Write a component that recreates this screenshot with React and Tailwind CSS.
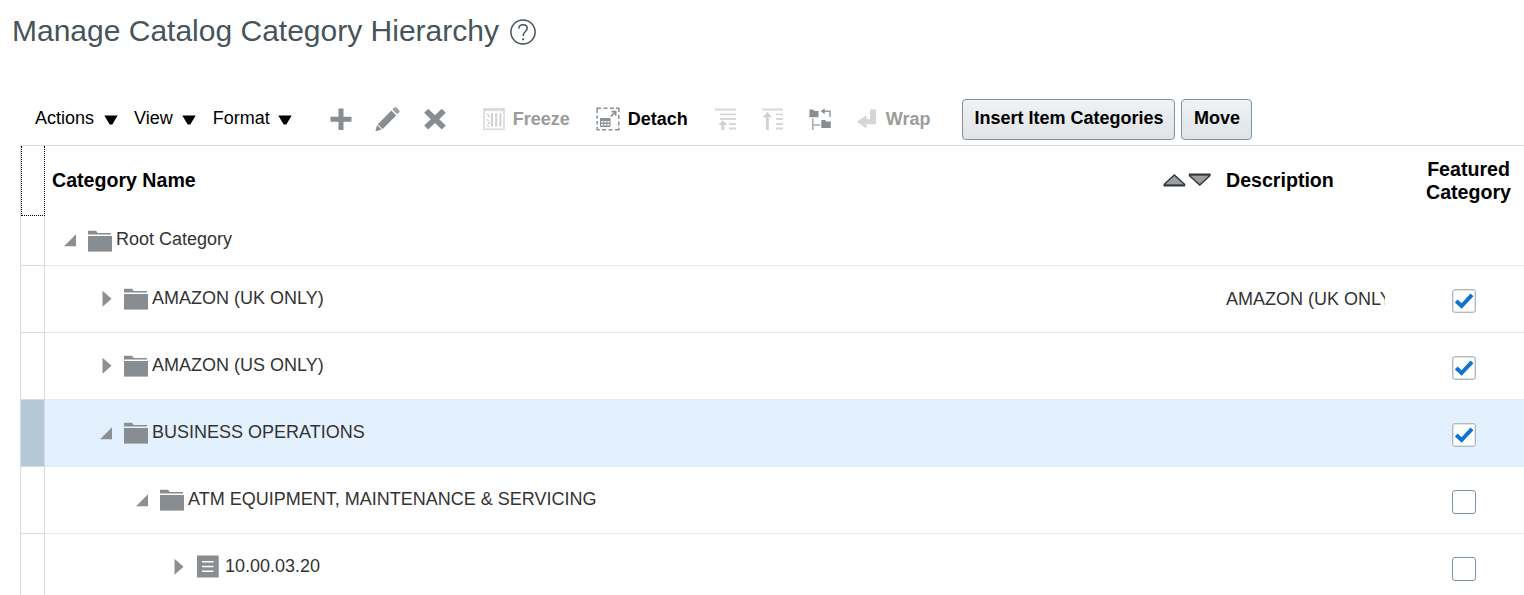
import React from 'react';

const rows = [
  { name: 'Root Category', level: 0, open: true, type: 'root' },
  { name: 'AMAZON (UK ONLY)', level: 1, description: 'AMAZON (UK ONLY)', featured: true },
  { name: 'AMAZON (US ONLY)', level: 1, featured: true },
  { name: 'BUSINESS OPERATIONS', level: 1, open: true, featured: true, selected: true },
  { name: 'ATM EQUIPMENT, MAINTENANCE & SERVICING', level: 2, open: true, featured: false },
  { name: '10.00.03.20', level: 3, type: 'item', featured: false },
];

const indents = ['pl-[18px]', 'pl-[54px]', 'pl-[90px]', 'pl-[126px]'];

function Svg({ w, h, className = '', children }) {
  return (
    <svg width={w} height={h} viewBox={`0 0 ${w} ${h}`} className={`shrink-0 ${className}`} fill="none">
      {children}
    </svg>
  );
}

function HelpIcon() {
  return (
    <Svg w={28} h={28} className="ml-[10.5px] mt-[17.5px]">
      <circle cx="14" cy="14" r="12.1" stroke="#47545a" strokeWidth="1.5" />
      <path d="M9.8 10.6C9.9 8 11.5 6.7 14 6.7s4.2 1.4 4.2 3.6c0 3.2-4 3.6-4 7v.6" stroke="#47545a" strokeWidth="1.5" />
      <circle cx="14.1" cy="21.3" r="1.1" fill="#47545a" />
    </Svg>
  );
}

function Caret() {
  return (
    <Svg w={14} h={10} className="mt-[5px]">
      <path d="M.3.5h13.4L8.3 9.4H5.7z" fill="#000" />
    </Svg>
  );
}

function PlusIcon() {
  return (
    <Svg w={24} h={24} className="ml-[37px]">
      <path d="M9.5 1.5h5v8.3h8v5h-8V23h-5v-8.2h-8v-5h8z" fill="#878d91" />
    </Svg>
  );
}

function PencilIcon() {
  return (
    <Svg w={26} h={26} className="ml-[22px]">
      <path d="m16.4 4.6 4.8 4.8L7.6 23l-4.8-4.8z" fill="#878d91" />
      <path d="M17.4 3.6 19.4 1.6q1-.9 2 0l2.8 2.8q.8.9 0 1.9l-2 2z" fill="#9aa0a3" />
      <path d="m2.1 19 4.6 4.6L.4 25.2z" fill="#878d91" />
    </Svg>
  );
}

function DeleteIcon() {
  return (
    <Svg w={24} h={24} className="ml-[22px]">
      <path d="m5.2 1.8 6.8 6.5 6.8-6.5 4 4L16.2 12.2l6.6 6.4-4 4L12 16l-6.8 6.6-4-4 6.6-6.4L1.2 5.8z" fill="#878d91" />
    </Svg>
  );
}

function FreezeIcon() {
  return (
    <Svg w={22} h={22} className="ml-[36px]">
      <path d="M1 .8h20v20.4H1z" stroke="#d8dadb" strokeWidth="1.6" />
      <path d="M1 2h20" stroke="#d8dadb" strokeWidth="2.4" />
      <path d="M4 5.5 5.6 7M5 9l2-1.5M4 11.5 6 13M5 15.5l2-1M4 17.5l2 1" stroke="#d0d2d3" strokeWidth="1.5" />
      <path d="M9 5v13.5M13.2 5v13.5M17.4 5v13.5" stroke="#d0d2d3" strokeWidth="2" />
    </Svg>
  );
}

function DetachIcon() {
  return (
    <Svg w={24} h={24} className="ml-[26px]">
      <path d="M1.2 6V1.2H5M7.5 1.2h4M14 1.2h4M20 1.2h2.8V5M22.8 8v4M22.8 14.5v4M22.8 20.5v2.3H19M16.5 22.8h-4M10 22.8H6M3.8 22.8H1.2V20M1.2 17.5v-3.5M1.2 11.8V8.5" stroke="#8b9195" strokeWidth="1.5" />
      <path d="M4 11h10.5v9H4z" fill="#8b9195" />
      <path d="M5.3 14h2v1.6h-2zM8.3 14h2v1.6h-2zM11.3 14h2v1.6h-2zM5.3 17h2v1.6h-2zM8.3 17h2v1.6h-2zM11.3 17h2v1.6h-2z" fill="#fff" />
      <path d="m14.8 9.3 4.2-4" stroke="#8b9195" strokeWidth="1.7" />
      <path d="M15.5 3.8h5v5h-1.6V5.4h-3.4z" fill="#8b9195" />
    </Svg>
  );
}

function GoUpIcon() {
  return (
    <Svg w={22} h={22} className="ml-[27px]">
      <path d="M0 1.5h21M5 6.3h16M5 11h16M14 16h7M14 20.5h7" stroke="#d6d8d9" strokeWidth="1.8" />
      <path d="M7.8 12.3 12.3 17H9.2v5H6.4v-5H3.3z" fill="#d0d2d3" />
    </Svg>
  );
}

function GoTopIcon() {
  return (
    <Svg w={22} h={22} className="ml-[25px]">
      <path d="M0 1.5h21M14 6.3h7M14 11h7M14 16h7M14 20.5h7" stroke="#d6d8d9" strokeWidth="1.8" />
      <path d="M5.3 4 10 9.2H6.8V22H3.9V9.2H.6z" fill="#d0d2d3" />
    </Svg>
  );
}

function ShowAsTopIcon() {
  return (
    <Svg w={24} h={22} className="ml-[25px]">
      <path d="M.5 1.5h3.6l1 1.4h4.4v6.3H.5zM12.3 12h3.8l1 1.6h4.7v6.4h-9.5z" fill="#878d91" />
      <path d="M3.8 10.5V22M3.8 17h7.5" stroke="#a5aaad" strokeWidth="1.5" />
      <path d="M14 3.2h7V9" stroke="#969c9f" strokeWidth="1.5" />
      <path d="m11.7 3.2 4-3v6z" fill="#878d91" />
    </Svg>
  );
}

function WrapIcon() {
  return (
    <Svg w={21} h={20} className="ml-[23px]">
      <path d="M14 .5h6v14.8h-9.5v4.2L.6 12.8l9.9-6.5v4H14z" fill="#d4d6d7" />
    </Svg>
  );
}

function FolderIcon() {
  return (
    <Svg w={24} h={22} className="ml-[11px] mt-px">
      <path d="M0 .7h8.2q.7 2.3 2 2.3H23v1.3H0z" fill="#878d91" />
      <path d="M0 4.5h23" stroke="#bfc3c5" />
      <path d="M0 6h24v15.6H0z" fill="#878d91" />
    </Svg>
  );
}

function ItemIcon() {
  return (
    <Svg w={22} h={23} className="ml-[12px]">
      <path d="M0 .5h21.7v22H0z" fill="#878d91" />
      <path d="M5 6.8h11.5M5 11.5h11.5M5 16.3h11.5" stroke="#fff" strokeWidth="1.5" />
    </Svg>
  );
}

function Disclosure({ open }) {
  return (
    <Svg w={14} h={18}>
      {open ? <path d="M13 3.3v12H1z" fill="#8b9094" /> : <path d="M3.5.8v16l9-8z" fill="#8b9094" />}
    </Svg>
  );
}

function SortIcons() {
  return (
    <Svg w={50} h={16}>
      <path d="M2.3 13.5v-1.2L12.3 3l10.2 9.3v1.2z" fill="#9a9fa3" stroke="#333" strokeWidth="1.4" />
      <path d="M1.8 13.4h21" stroke="#333" strokeWidth="1.8" />
      <path d="M27.5 2.5v1.2L37.8 13l10-9.3V2.5z" fill="#9a9fa3" stroke="#333" strokeWidth="1.4" />
      <path d="M27 2.6h21.4" stroke="#333" strokeWidth="1.8" />
    </Svg>
  );
}

function Checkbox({ checked }) {
  return (
    <span
      className={`flex h-6 w-6 items-center justify-center rounded-[3px] border bg-white ${
        checked ? 'border-[#b0b9c1] shadow-[inset_0_0_0_1px_#e2e5e8]' : 'border-[#7b92a5]'
      }`}
    >
      {checked && (
        <Svg w={20} h={20}>
          <path d="m2.2 10 5.4 5L18 3.8" stroke="#0f74d1" strokeWidth="4" />
        </Svg>
      )}
    </span>
  );
}

function Toolbar() {
  return (
    <div className="flex h-[48px] items-center pl-[35px] pb-[5px] text-[18px] leading-[22px] whitespace-nowrap text-black">
      <button className="mb-[2px] flex items-center gap-[10px]">Actions<Caret /></button>
      <button className="mb-[2px] ml-[16px] flex items-center gap-[9px]">View<Caret /></button>
      <button className="mb-[2px] ml-[17px] flex items-center gap-[8px]">Format<Caret /></button>
      <PlusIcon />
      <PencilIcon />
      <DeleteIcon />
      <FreezeIcon />
      <span className="ml-[8px] font-bold text-[#9b9b9b]">Freeze</span>
      <DetachIcon />
      <span className="ml-[8px] font-bold">Detach</span>
      <GoUpIcon />
      <GoTopIcon />
      <ShowAsTopIcon />
      <WrapIcon />
      <span className="ml-[9px] font-bold text-[#9b9b9b]">Wrap</span>
      <button className="mt-[2px] ml-[31px] h-[41px] w-[213px] rounded-[4px] border border-[#7b92a5] bg-gradient-to-b from-[#f0f2f4] to-[#e0e4e7] pb-[3px] pl-[2px] font-bold">
        Insert Item Categories
      </button>
      <button className="mt-[2px] ml-[6px] h-[41px] w-[71px] rounded-[4px] border border-[#7b92a5] bg-gradient-to-b from-[#f0f2f4] to-[#e0e4e7] pb-[3px] pl-[2px] font-bold">
        Move
      </button>
    </div>
  );
}

function Row({ row }) {
  const bg = row.selected ? 'bg-[#e3f1ff]' : 'bg-white';
  return (
    <div className={`flex ${row.type === 'root' ? 'h-[50px]' : 'h-[67px]'}`}>
      <div className={`w-[25px] shrink-0 border-r border-b border-l border-[#d2dce6] ${row.selected ? 'bg-[#b5c8d8]' : ''}`} />
      <div className={`flex flex-1 items-center border-b border-[#e6eaed] pb-px ${bg} ${indents[row.level]}`}>
        <span className="flex"><Disclosure open={row.open} /></span>
        {row.type === 'item' ? <ItemIcon /> : <FolderIcon />}
        <span className={`leading-[22px] ${row.type === 'item' ? 'ml-[6px]' : 'ml-[4px]'} ${row.type === 'root' ? 'mb-[3px]' : 'mb-[1px]'}`}>
          {row.name}
        </span>
      </div>
      <div className={`flex w-[167px] items-center overflow-hidden border-b border-[#e6eaed] pl-[8px] ${bg}`}>
        <span className="mb-px w-[159px] overflow-hidden leading-[22px] whitespace-nowrap">{row.description}</span>
      </div>
      <div className={`flex w-[139px] items-center border-b border-[#e6eaed] pt-[4px] pl-[67px] ${bg}`}>
        {row.featured !== undefined && <Checkbox checked={row.featured} />}
      </div>
    </div>
  );
}

export default function App() {
  return (
    <div className="h-[595px] w-[1524px] overflow-hidden bg-white font-['Liberation_Sans',Arial,sans-serif]">
      <header className="flex h-[97px] pl-[12px]">
        <h1 className="pt-[13px] text-[30px] leading-[35px] whitespace-nowrap text-[#47545a]">Manage Catalog Category Hierarchy</h1>
        <HelpIcon />
      </header>
      <Toolbar />
      <div className="ml-[20px] border-t border-[#d2dce6] text-[18px] text-[#333]">
        <div className="flex h-[70px] text-[19.6px] leading-[23px] font-bold text-black">
          <div className="w-[25px] shrink-0 border-l border-[#d2dce6]">
            <div className="h-full border-r border-b border-l border-dotted border-black" />
          </div>
          <div className="flex flex-1 items-center justify-between pl-[7px] pr-[6px] pb-[2px]">
            <span>Category Name</span>
            <SortIcons />
          </div>
          <div className="flex w-[167px] items-center pl-[8px] pb-[2px]">Description</div>
          <div className="flex w-[139px] items-center justify-center pl-[28px] text-center">
            <span className="w-[90px]">Featured Category</span>
          </div>
        </div>
        {rows.map((row) => (
          <Row key={row.name} row={row} />
        ))}
      </div>
    </div>
  );
}
